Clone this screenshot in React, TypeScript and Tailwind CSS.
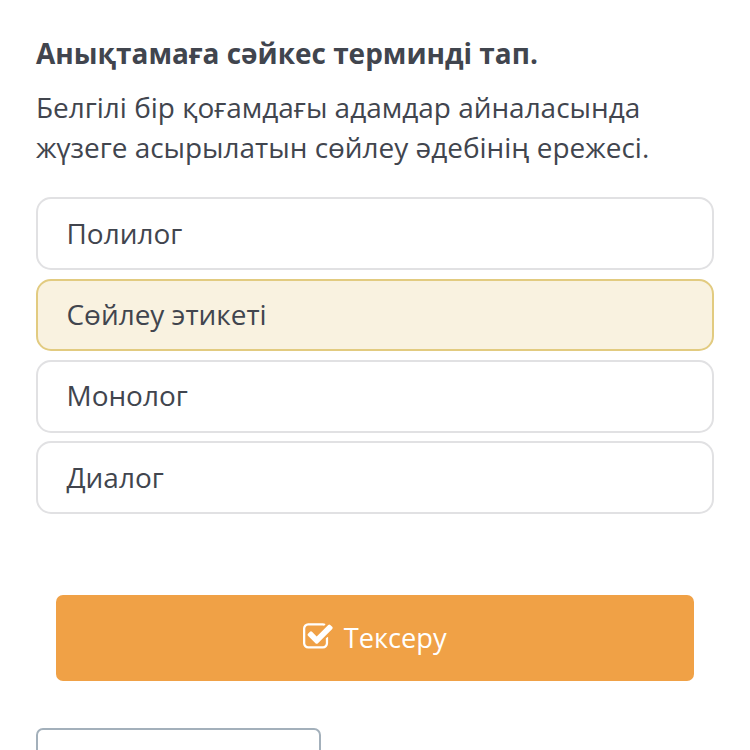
const options = ['Полилог', 'Сөйлеу этикеті', 'Монолог', 'Диалог']
const selected = 1

function CheckIcon() {
  return (
    <svg viewBox="64 0 1664 1792" className="h-8 w-[29.7px]" fill="currentColor" aria-hidden="true">
      <path d="M1472 930v318q0 119-84.5 203.5t-203.5 84.5h-832q-119 0-203.5-84.5t-84.5-203.5v-832q0-119 84.5-203.5t203.5-84.5h832q63 0 117 25 15 7 18 23 3 17-9 29l-49 49q-10 10-23 10-3 0-9-2-23-6-45-6h-832q-66 0-113 47t-47 113v832q0 66 47 113t113 47h832q66 0 113-47t47-113v-254q0-13 9-22l64-64q10-10 23-10 6 0 12 3 20 8 20 29zm231-489l-814 814q-24 24-57 24t-57-24l-430-430q-24-24-24-57t24-57l110-110q24-24 57-24t57 24l263 263 647-647q24-24 57-24t57 24l110 110q24 24 24 57t-24 57z" />
    </svg>
  )
}

function Option({ label, active }: { label: string; active: boolean }) {
  return (
    <button
      className={`flex h-[72.6px] w-full items-center rounded-[15px] border-2 px-[28.5px] pb-[1.6px] text-left ${
        active ? 'border-[#e2cb80] bg-[#f9f2e0]' : 'border-[#e1e1e3] bg-white'
      }`}
    >
      {label}
    </button>
  )
}

export default function App() {
  return (
    <main className="h-[750px] overflow-hidden bg-white px-9 pt-[33px] font-['Open_Sans','Noto_Sans',sans-serif] text-[27.95px] leading-10 text-[#41454e]">
      <h1 className="font-bold">Анықтамаға сәйкес терминді тап.</h1>
      <p className="mt-[14px] whitespace-nowrap">
        Белгілі бір қоғамдағы адамдар айналасында
        <br />
        жүзеге асырылатын сөйлеу әдебінің ережесі.
      </p>
      <div className="mt-[30.2px] flex flex-col gap-[8.8px]">
        {options.map((label, i) => (
          <Option key={label} label={label} active={i === selected} />
        ))}
      </div>
      <div className="mt-[81px] px-5">
        <button className="flex h-[86px] w-full items-center justify-center gap-[10.5px] rounded-[7px] bg-[#f0a146] pb-0.5 text-[27.2px] text-white">
          <CheckIcon />
          <span className="pt-0.5">Тексеру</span>
        </button>
      </div>
      <div className="mt-[47px] h-20 w-[285px] rounded-[7px] border-2 border-[#a3b0bb]" />
    </main>
  )
}
